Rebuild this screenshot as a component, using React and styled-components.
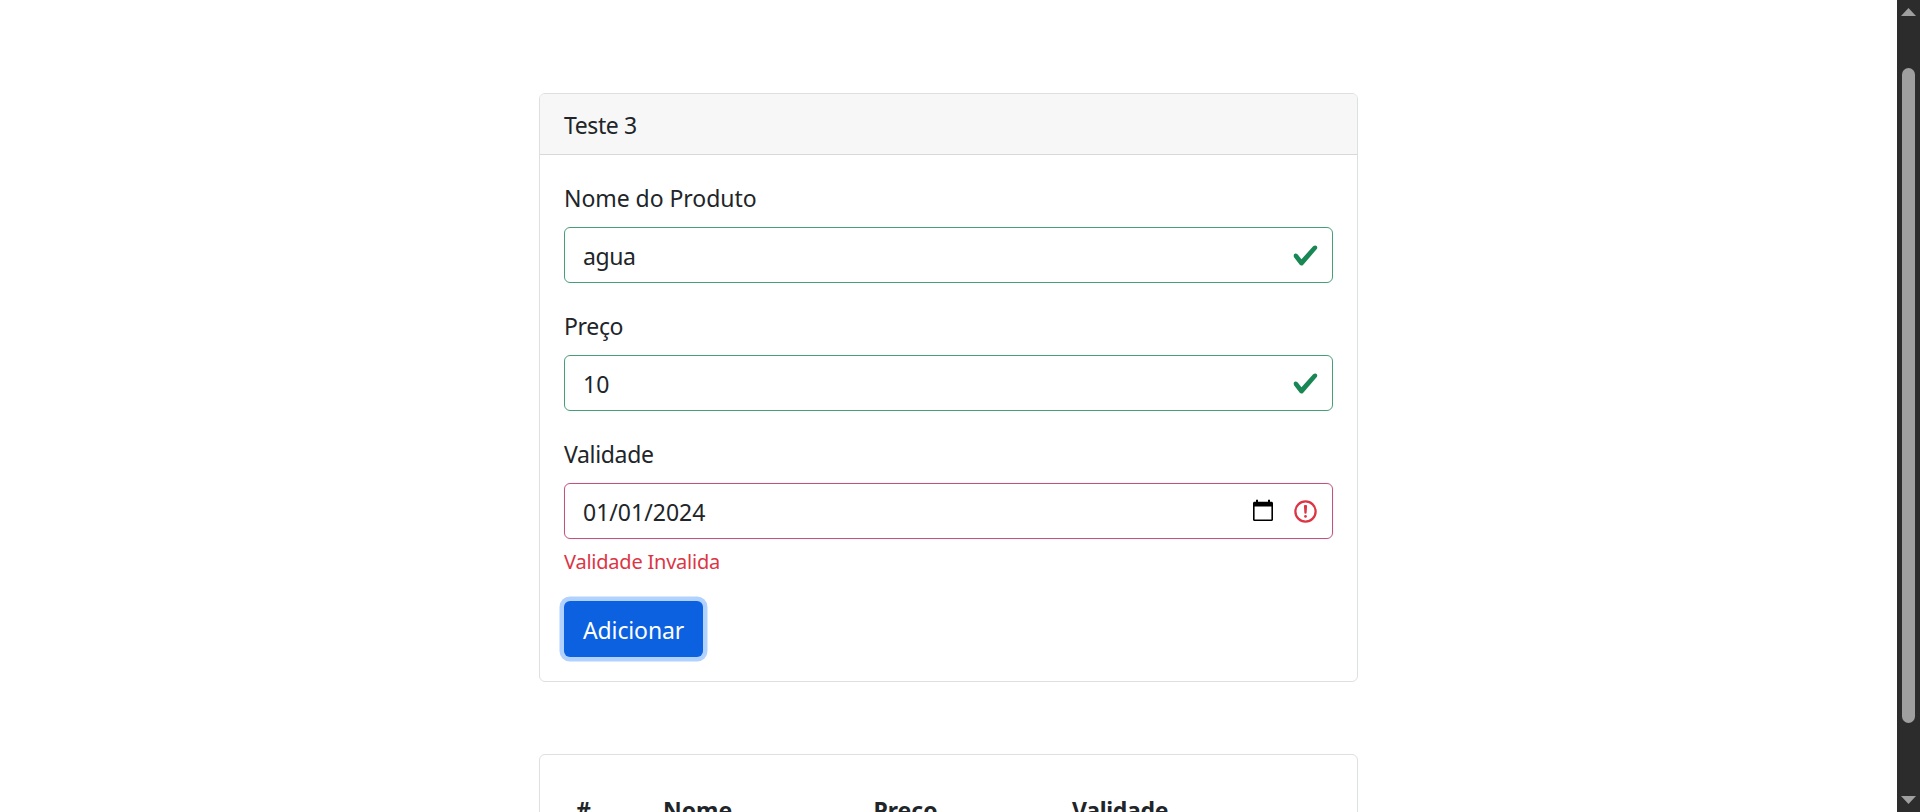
import React from "react";
import styled, { createGlobalStyle } from "styled-components";

const GlobalStyle = createGlobalStyle`
  *, *::before, *::after { box-sizing: border-box; }
  body {
    margin: 0;
    overflow: hidden;
    background: #fff;
    color: #212529;
    font-family: "Noto Sans", "Open Sans", sans-serif;
    font-size: 23px;
    line-height: 36px;
  }
`;

const Viewport = styled.div`
  display: flex;
  height: 812px;
  overflow: hidden;
`;

const Page = styled.main`
  flex: 1;
  display: flex;
  flex-direction: column;
  align-items: center;
  gap: 72px;
  padding: 93px 0 0;
  overflow: hidden;
`;

const Card = styled.section`
  flex: none;
  width: 819px;
  border: 1px solid #dedfe0;
  border-radius: 6px;
  background: #fff;
  overflow: hidden;
`;

const CardHeader = styled.header`
  height: 61px;
  padding: 12px 24px;
  background: #f7f7f7;
  border-bottom: 1px solid #d9d9d9;
  line-height: 38px;
  letter-spacing: -0.4px;
`;

const CardBody = styled.div`
  padding: 24px;
`;

const Form = styled.form`
  display: flex;
  flex-direction: column;
  align-items: flex-start;
  gap: 24px;
`;

const Field = styled.div`
  width: 100%;
`;

const Label = styled.label`
  display: block;
  height: 36px;
  margin-bottom: 12px;
  line-height: 38px;
  letter-spacing: ${(p) => p.$tracking || 0}px;
`;

const Control = styled.div`
  display: flex;
  align-items: center;
  gap: 16.5px;
  height: 56px;
  padding: 0 13.5px 0 18px;
  border: 1px solid ${(p) => (p.$invalid ? "#c4527a" : "#479f78")};
  border-radius: 6px;
  box-shadow: ${(p) => (p.$invalid ? "0 0 0 1px rgba(13, 110, 253, 0.04)" : "none")};

  svg {
    flex: none;
  }
`;

const Input = styled.input`
  flex: 1;
  min-width: 0;
  height: 38px;
  margin: 2px 0 0;
  padding: 0;
  border: 0;
  outline: 0;
  background: transparent;
  color: #212529;
  font: inherit;
  line-height: 36px;
  letter-spacing: ${(p) => p.$tracking || 0}px;
`;

const Feedback = styled.div`
  height: 31.5px;
  margin-top: 6px;
  color: #dc3545;
  font-size: 20px;
  line-height: 34px;
  letter-spacing: -0.22px;
`;

const SubmitButton = styled.button`
  height: 56px;
  padding: 2px 19px 0;
  border: 0;
  border-radius: 6px;
  background: #0c61e1;
  box-shadow: 0 0 0 4.5px #b1d2fe;
  color: #fff;
  font: inherit;
  letter-spacing: -0.13px;
`;

const Table = styled.table`
  width: 100%;
  table-layout: fixed;
  border-collapse: collapse;
`;

const HeadCell = styled.th`
  width: ${(p) => p.$width}px;
  padding: 12px;
  border-bottom: 1px solid #dee2e6;
  text-align: left;
  font-weight: 700;
  line-height: 38px;
  letter-spacing: ${(p) => p.$tracking || 0}px;
`;

const ScrollBar = styled.aside`
  flex: none;
  display: flex;
  flex-direction: column;
  align-items: center;
  width: 23px;
  padding: 8px 0;
  background: #2c2c2c;
`;

const Thumb = styled.div`
  width: 13px;
  height: 655px;
  margin: 52px 0 auto;
  border-radius: 7px;
  background: #9f9f9f;
`;

const CheckIcon = () => (
  <svg width="27" height="27" viewBox="0 0 8 8">
    <path fill="#198754" d="M2.3 6.73.6 4.53c-.4-1.04.46-1.4 1.1-.8l1.1 1.4 3.4-3.8c.6-.63 1.6-.27 1.2.7l-4 4.6c-.43.5-.8.4-1.1.1z" />
  </svg>
);

const ErrorIcon = () => (
  <svg width="27" height="27" viewBox="0 0 12 12" fill="none" stroke="#dc3545">
    <circle cx="6" cy="6" r="4.5" />
    <path strokeLinejoin="round" d="M5.8 3.6h.4L6 6.5z" />
    <circle cx="6" cy="8.2" r=".6" fill="#dc3545" stroke="none" />
  </svg>
);

const CalendarIcon = () => (
  <svg width="24" height="24" viewBox="0 0 24 24">
    <path
      fillRule="evenodd"
      d="M20.5 2.8H19V.8h-2v2H7V.8H5v2H3.5C2.6 2.8 2 3.4 2 4.3v16.2c0 .9.6 1.5 1.5 1.5h17c.9 0 1.5-.6 1.5-1.5V4.3c0-.9-.6-1.5-1.5-1.5zM3.6 7.6h16.8v12.9H3.6z"
    />
  </svg>
);

const Arrow = ({ down }) => (
  <svg width="15" height="8" viewBox="0 0 15 8">
    <path fill="#9f9f9f" d={down ? "M0 0h15L7.5 8z" : "M0 8h15L7.5 0z"} />
  </svg>
);

export default function App() {
  return (
    <>
      <GlobalStyle />
      <Viewport>
        <Page>
          <Card>
            <CardHeader>Teste 3</CardHeader>
            <CardBody>
              <Form>
                <Field>
                  <Label htmlFor="nome" $tracking={-0.05}>Nome do Produto</Label>
                  <Control>
                    <Input id="nome" defaultValue="agua" $tracking={-0.4} />
                    <CheckIcon />
                  </Control>
                </Field>
                <Field>
                  <Label htmlFor="preco" $tracking={-0.35}>Preço</Label>
                  <Control>
                    <Input id="preco" defaultValue="10" />
                    <CheckIcon />
                  </Control>
                </Field>
                <Field>
                  <Label htmlFor="validade" $tracking={-0.33}>Validade</Label>
                  <Control $invalid>
                    <Input id="validade" defaultValue="01/01/2024" />
                    <CalendarIcon />
                    <ErrorIcon />
                  </Control>
                  <Feedback>Validade Invalida</Feedback>
                </Field>
                <SubmitButton type="button">Adicionar</SubmitButton>
              </Form>
            </CardBody>
          </Card>
          <Card>
            <CardBody>
              <Table>
                <thead>
                  <tr>
                    <HeadCell $width={87} $tracking={-0.5}>#</HeadCell>
                    <HeadCell $width={210.5}>Nome</HeadCell>
                    <HeadCell $width={198.5}>Preço</HeadCell>
                    <HeadCell $width={273} $tracking={-0.3}>Validade</HeadCell>
                  </tr>
                </thead>
              </Table>
            </CardBody>
          </Card>
        </Page>
        <ScrollBar>
          <Arrow />
          <Thumb />
          <Arrow down />
        </ScrollBar>
      </Viewport>
    </>
  );
}
